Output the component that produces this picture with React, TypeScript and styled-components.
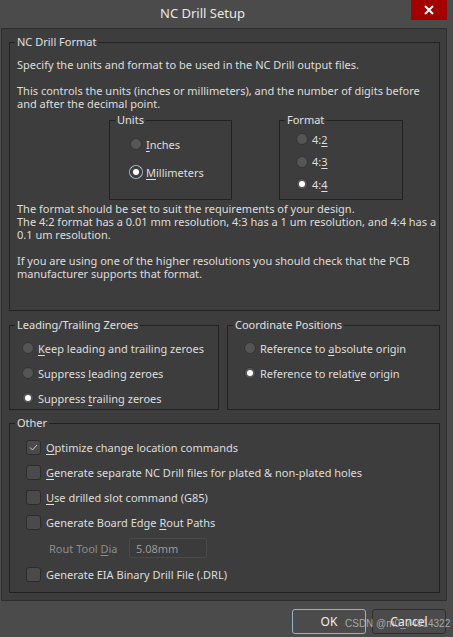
import React from 'react';
import styled, { createGlobalStyle, css } from 'styled-components';

const Global = createGlobalStyle`
  html, body { margin: 0; padding: 0; background: #4b4b4b; }
  body {
    font-family: "Noto Sans", "Open Sans", sans-serif;
    font-size: 11px;
    color: #dedede;
  }
  u { text-underline-offset: 2px; }
`;

const Window = styled.div`
  width: 453px;
  height: 637px;
  display: flex;
  flex-direction: column;
  background: #4b4b4b;
  position: relative;
  overflow: hidden;
`;

const TitleBar = styled.div`
  height: 28px;
  display: flex;
  align-items: flex-start;
  flex-shrink: 0;
`;

const Title = styled.div`
  flex: 1;
  text-align: center;
  font-size: 13px;
  line-height: 26px;
  color: #e8e8e8;
  padding-right: 6px;
`;

const CloseButton = styled.div`
  width: 36px;
  height: 20px;
  margin-right: 6px;
  background: #a30000;
  display: flex;
  align-items: center;
  justify-content: center;
`;

const Panel = styled.div`
  margin: 0 6px 0 1px;
  border: 1px solid #2e2e2e;
  background: #3d3d3d;
  padding: 6px 6px 7px 7px;
  display: flex;
  flex-direction: column;
`;

const Group = styled.fieldset<{ $pt?: number; $pb?: number; $pl?: number; $width?: number; $mt?: number }>`
  margin: ${p => p.$mt ?? 0}px 0 0 0;
  border: 1px solid #222;
  padding: ${p => p.$pt ?? 0}px 0 ${p => p.$pb ?? 0}px ${p => p.$pl ?? 7}px;
  min-width: 0;
  box-sizing: border-box;
  ${p => p.$width !== undefined && css`width: ${p.$width}px; flex-shrink: 0;`}
  display: flex;
  flex-direction: column;
`;

const Legend = styled.legend<{ $pl?: number }>`
  padding: 0 2px;
  margin-left: ${p => 5 - (p.$pl ?? 7)}px;
  line-height: 14px;
  color: #e0e0e0;
`;

const Para = styled.p<{ $mt?: number }>`
  margin: ${p => p.$mt ?? 0}px 0 0 0;
  line-height: 13px;
`;

const SubRow = styled.div`
  display: flex;
  margin-top: 3px;
`;

const SubGroup = styled(Group)<{ $ml: number }>`
  margin-left: ${p => p.$ml}px;
`;

const OptionList = styled.div<{ $gap: number }>`
  display: flex;
  flex-direction: column;
  gap: ${p => p.$gap}px;
`;

const Option = styled.label<{ $h?: number }>`
  display: flex;
  align-items: center;
  height: ${p => p.$h ?? 18}px;
  gap: 4px;
  white-space: nowrap;
`;

const Radio = styled.span<{ $checked?: boolean; $focus?: boolean }>`
  width: 12px;
  height: 12px;
  border-radius: 50%;
  box-sizing: border-box;
  background: #555;
  border: 1px solid #343434;
  position: relative;
  flex-shrink: 0;
  ${p => p.$checked && css`
    &::after {
      content: '';
      position: absolute;
      left: 50%;
      top: 50%;
      width: 6px;
      height: 6px;
      margin: -3px 0 0 -3px;
      border-radius: 50%;
      background: #fff;
    }
  `}
  ${p => p.$focus && css`
    background: #444;
    border-color: #2b2b2b;
    box-shadow: 0 0 0 1px #a9b8c6;
  `}
`;

const TwoCols = styled.div`
  display: flex;
  gap: 8px;
  margin-top: 7px;
`;

const CheckRow = styled.label`
  display: flex;
  align-items: center;
  height: 18px;
  gap: 5px;
  white-space: nowrap;
`;

const CheckBox = styled.span`
  width: 15px;
  height: 15px;
  box-sizing: border-box;
  border-radius: 3px;
  background: #4a4a4a;
  border: 1px solid #2c2c2c;
  display: flex;
  align-items: center;
  justify-content: center;
  flex-shrink: 0;
`;

const FieldRow = styled.div`
  display: flex;
  align-items: center;
  height: 20px;
  margin-left: 23px;
  gap: 10px;
`;

const FieldLabel = styled.span`
  color: #8c8c8c;
  width: 70px;
`;

const TextInput = styled.div`
  width: 78px;
  height: 20px;
  box-sizing: border-box;
  border: 1px solid #4a4a4a;
  border-radius: 2px;
  background: #3b3b3b;
  color: #9a9a9a;
  padding-left: 6px;
  display: flex;
  align-items: center;
`;

const ButtonBar = styled.div`
  display: flex;
  justify-content: flex-end;
  gap: 6px;
  padding: 8px 7px 0 0;
`;

const Button = styled.div<{ $primary?: boolean }>`
  width: 74px;
  height: 25px;
  box-sizing: border-box;
  border-radius: 3px;
  border: 1px solid ${p => (p.$primary ? '#93b3cc' : '#2e2e2e')};
  background: #4b4b4b;
  display: flex;
  align-items: center;
  justify-content: center;
  font-size: 12px;
  color: #f0f0f0;
`;

const Watermark = styled.div`
  position: absolute;
  left: 345px;
  top: 617px;
  font-size: 10px;
  line-height: 14px;
  color: rgba(200, 200, 200, 0.75);
  font-family: "Liberation Sans", Arial, sans-serif;
  pointer-events: none;
  white-space: nowrap;
`;

const CheckMark = () => (
  <svg width="9" height="7" viewBox="0 0 9 7">
    <polyline points="1,3.5 3.5,6 8,1" fill="none" stroke="#cfcfcf" strokeWidth="1" />
  </svg>
);

export default function App() {
  return (
    <>
      <Global />
      <Window>
        <TitleBar>
          <Title>NC Drill Setup</Title>
          <CloseButton>
            <svg width="10" height="10" viewBox="0 0 10 10">
              <path d="M1 1 L9 9 M9 1 L1 9" stroke="#fff" strokeWidth="2" />
            </svg>
          </CloseButton>
        </TitleBar>
        <Panel>
          <Group $pt={9} $pb={30}>
            <Legend>NC Drill Format</Legend>
            <Para>Specify the units and format to be used in the NC Drill output files.</Para>
            <Para $mt={13}>
              This controls the units (inches or millimeters), and the number of digits before and after the decimal point.
            </Para>
            <SubRow>
              <SubGroup $ml={92} $width={123} $pt={7} $pb={17} $pl={20}>
                <Legend $pl={20}>Units</Legend>
                <OptionList $gap={8}>
                  <Option $h={20}><Radio /><span><u>I</u>nches</span></Option>
                  <Option $h={20}><Radio $checked $focus /><span><u>M</u>illimeters</span></Option>
                </OptionList>
              </SubGroup>
              <SubGroup $ml={47} $width={124} $pt={2} $pb={5} $pl={16}>
                <Legend $pl={16}>Format</Legend>
                <OptionList $gap={2.5}>
                  <Option $h={20}><Radio /><span>4:<u>2</u></span></Option>
                  <Option $h={20}><Radio /><span>4:<u>3</u></span></Option>
                  <Option $h={20}><Radio $checked /><span>4:<u>4</u></span></Option>
                </OptionList>
              </SubGroup>
            </SubRow>
            <Para $mt={2}>
              The format should be set to suit the requirements of your design.
              <br />
              The 4:2 format has a 0.01 mm resolution, 4:3 has a 1 um resolution, and 4:4 has a 0.1 um resolution.
            </Para>
            <Para $mt={13}>
              If you are using one of the higher resolutions you should check that the PCB manufacturer supports that format.
            </Para>
          </Group>
          <TwoCols>
            <Group $width={210} $pt={7} $pb={2} $pl={12}>
              <Legend $pl={12}>Leading/Trailing Zeroes</Legend>
              <OptionList $gap={7}>
                <Option><Radio /><span><u>K</u>eep leading and trailing zeroes</span></Option>
                <Option><Radio /><span>Suppress <u>l</u>eading zeroes</span></Option>
                <Option><Radio $checked /><span>Suppress <u>t</u>railing zeroes</span></Option>
              </OptionList>
            </Group>
            <Group $width={213} $pt={7} $pb={2} $pl={16}>
              <Legend $pl={16}>Coordinate Positions</Legend>
              <OptionList $gap={7}>
                <Option><Radio /><span>Reference to <u>a</u>bsolute origin</span></Option>
                <Option><Radio $checked /><span>Reference to relati<u>v</u>e origin</span></Option>
              </OptionList>
            </Group>
          </TwoCols>
          <Group $mt={6} $pt={8} $pb={9} $pl={16}>
            <Legend $pl={16}>Other</Legend>
            <OptionList $gap={7}>
              <CheckRow><CheckBox><CheckMark /></CheckBox><span><u>O</u>ptimize change location commands</span></CheckRow>
              <CheckRow><CheckBox /><span><u>G</u>enerate separate NC Drill files for plated &amp; non-plated holes</span></CheckRow>
              <CheckRow><CheckBox /><span><u>U</u>se drilled slot command (G85)</span></CheckRow>
              <CheckRow><CheckBox /><span>Generate Board Edge <u>R</u>out Paths</span></CheckRow>
              <FieldRow>
                <FieldLabel>Rout Tool <u>D</u>ia</FieldLabel>
                <TextInput>5.08mm</TextInput>
              </FieldRow>
              <CheckRow><CheckBox /><span>Generate EIA Binary Drill File (.DRL)</span></CheckRow>
            </OptionList>
          </Group>
        </Panel>
        <ButtonBar>
          <Button $primary>OK</Button>
          <Button>Cancel</Button>
        </ButtonBar>
        <Watermark>CSDN @m0_74814322</Watermark>
      </Window>
    </>
  );
}
